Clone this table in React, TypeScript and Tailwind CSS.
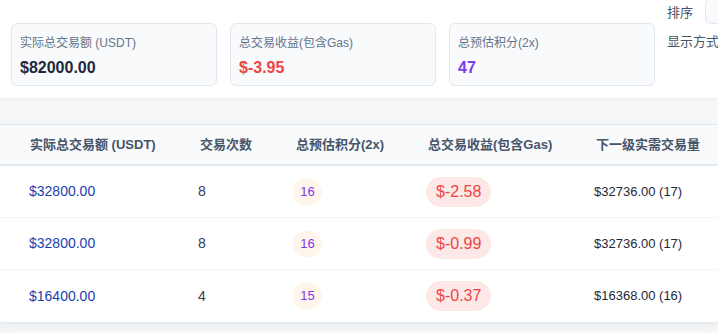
const FONT = { fontFamily: '"Liberation Sans", "Noto Sans CJK SC", sans-serif' };

type Row = { amount: string; count: number; points: number; profit: string; next: string };

const rows: Row[] = [
  { amount: "$32800.00", count: 8, points: 16, profit: "$-2.58", next: "$32736.00 (17)" },
  { amount: "$32800.00", count: 8, points: 16, profit: "$-0.99", next: "$32736.00 (17)" },
  { amount: "$16400.00", count: 4, points: 15, profit: "$-0.37", next: "$16368.00 (16)" },
];

function StatCard({ label, value, valueClass }: { label: string; value: string; valueClass: string }) {
  return (
    <div className="w-[206px] h-[63px] shrink-0 rounded-md border border-[#e2e8f0] bg-[#f8fafc] pl-[8px] pt-[11px]">
      <p className="text-[12px] leading-[16px] text-[#64748b]">{label}</p>
      <p className={`mt-[7px] text-[16px] leading-[20px] font-bold ${valueClass}`}>{value}</p>
    </div>
  );
}

export default function App() {
  return (
    <div className="w-[718px] h-[333px] overflow-hidden bg-[#f6f7f9] flex flex-col" style={FONT}>
      {/* Summary panel */}
      <div className="h-[98px] shrink-0 bg-white shadow-[0_1px_4px_rgba(0,0,0,0.04)] flex items-start pl-[11px]">
        <div className="flex gap-[13px] mt-[23px]">
          <StatCard label="实际总交易额 (USDT)" value="$82000.00" valueClass="text-[#1e293b]" />
          <StatCard label="总交易收益(包含Gas)" value="$-3.95" valueClass="text-[#ef4444]" />
          <StatCard label="总预估积分(2x)" value="47" valueClass="text-[#7c3aed]" />
        </div>
        <div className="ml-[12px] flex flex-col">
          <div className="flex items-center h-[26px]">
            <span className="text-[13px] text-[#475569] whitespace-nowrap">排序</span>
            <div className="ml-[12px] w-[40px] h-[26px] -mt-[4px] rounded-md border border-[#e2e8f0] bg-[#f8fafc]" />
          </div>
          <span className="mt-[5px] text-[13px] leading-[22px] text-[#475569] whitespace-nowrap">显示方式</span>
        </div>
      </div>

      {/* Table */}
      <div className="mt-[26px] bg-white border-y border-[#e2e8f0] shadow-[0_4px_10px_rgba(0,0,0,0.05)]">
        <div className="grid grid-cols-[198px_95px_133px_168px_1fr] h-[41px] items-center bg-[#f8fafc] border-b-2 border-[#e2e8f0] text-[13px] font-semibold text-[#475569] whitespace-nowrap">
          <div className="pl-[30px]">实际总交易额 (USDT)</div>
          <div className="pl-[2px]">交易次数</div>
          <div className="pl-[3px]">总预估积分(2x)</div>
          <div className="pl-[2px]">总交易收益(包含Gas)</div>
          <div className="pl-[2px]">下一级实需交易量</div>
        </div>
        {rows.map((r, i) => (
          <div
            key={i}
            className={`grid grid-cols-[198px_95px_133px_168px_1fr] h-[52px] items-center ${i < rows.length - 1 ? "border-b border-[#f1f5f9]" : ""}`}
          >
            <div className="pl-[29px] text-[14px] font-medium text-[#1e40af]">{r.amount}</div>
            <div className="text-[14px] text-[#334155]">{r.count}</div>
            <div>
              <span className="inline-flex items-center justify-center w-[29px] h-[26px] rounded-full bg-[#fff5ea] text-[13px] text-[#7c3aed]">
                {r.points}
              </span>
            </div>
            <div>
              <span className="inline-flex items-center h-[30px] px-[10px] rounded-full bg-[#fde8e8] text-[16px] text-[#ef4444]">
                {r.profit}
              </span>
            </div>
            <div className="text-[13px] text-[#1f2937] whitespace-nowrap">{r.next}</div>
          </div>
        ))}
      </div>
    </div>
  );
}
